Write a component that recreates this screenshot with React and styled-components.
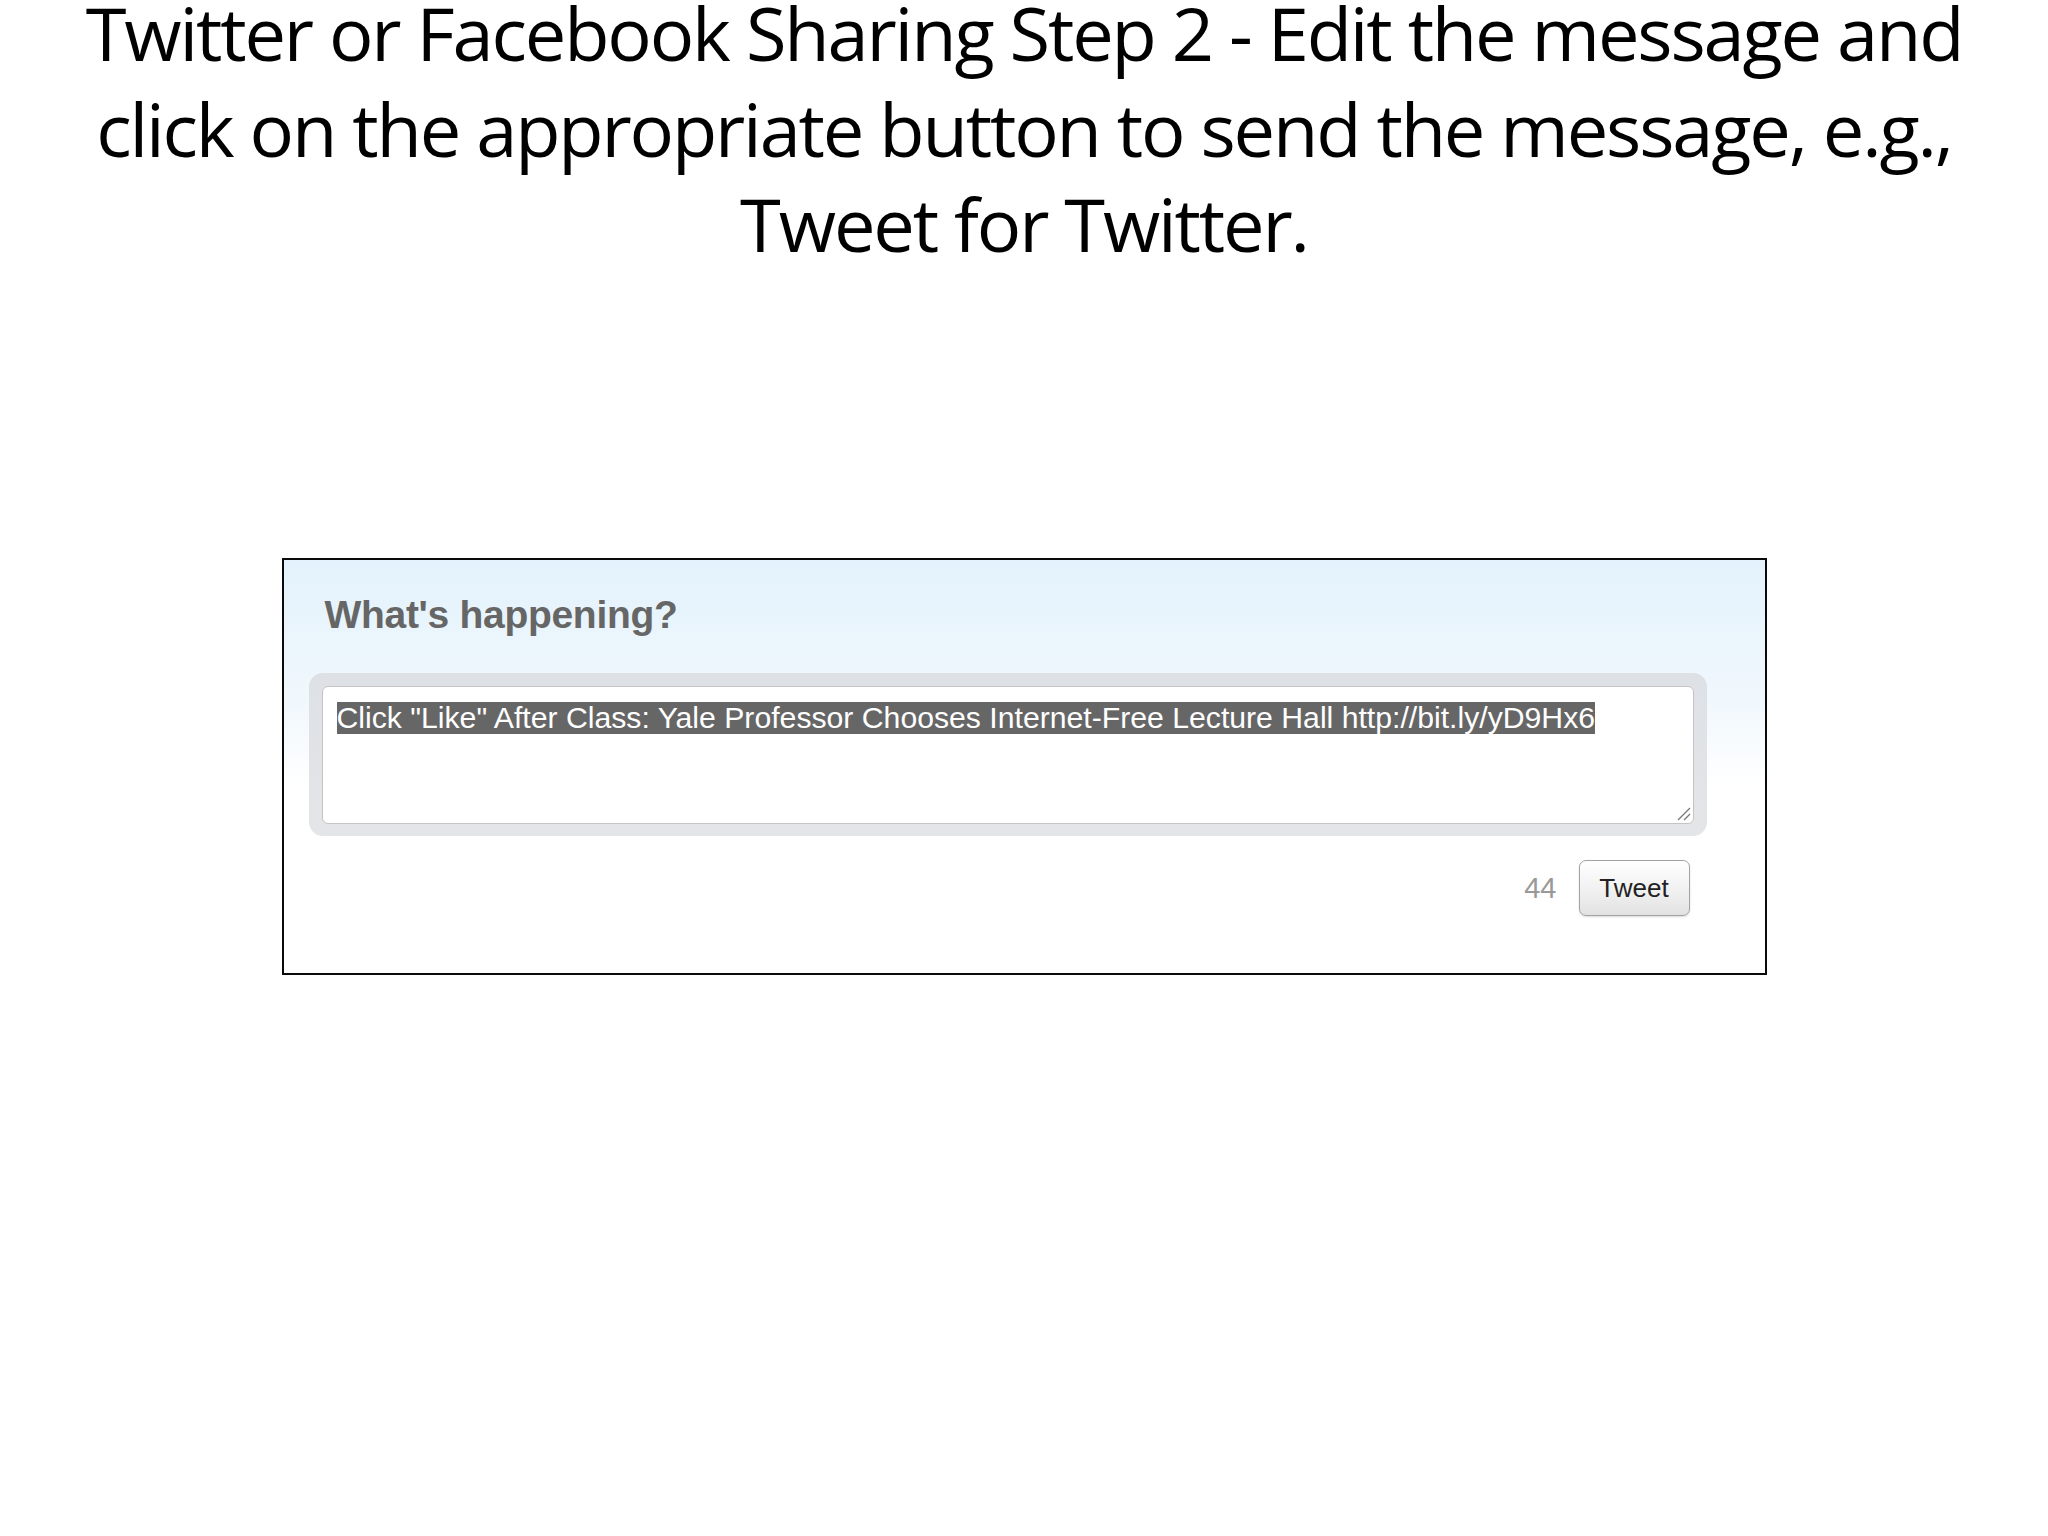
import React from "react";
import styled, { createGlobalStyle } from "styled-components";

const Global = createGlobalStyle`
  html, body { margin: 0; padding: 0; background: #ffffff; }
  body { width: 2048px; height: 1536px; overflow: hidden; }
`;

const Slide = styled.div`
  width: 2048px;
  height: 1536px;
  display: flex;
  flex-direction: column;
  align-items: center;
  background: #ffffff;
`;

const Title = styled.h1`
  margin: 0;
  width: 2000px;
  display: flex;
  flex-direction: column;
  align-items: center;
  font-family: "Open Sans", "Noto Sans", sans-serif;
  font-weight: 400;
  font-size: 74px;
  line-height: 95px;
  letter-spacing: -2.15px;
  color: #000000;
`;

const TitleLine = styled.span`
  white-space: nowrap;
  line-height: ${(p) => (p.$first ? "65px" : "95px")};
  margin-bottom: ${(p) => (p.$first ? "16px" : "0")};
`;

const Card = styled.section`
  box-sizing: border-box;
  margin-top: 287px;
  width: 1485px;
  height: 417px;
  border: 2px solid #0a0a0a;
  padding: 32px 58px 0 25px;
  display: flex;
  flex-direction: column;
  background: linear-gradient(to bottom, #e3f2fc 0%, #f1f8fd 35%, #ffffff 55%);
`;

const Heading = styled.h2`
  margin: 0 0 35px;
  padding-left: 16px;
  font-family: "Liberation Sans", Arial, sans-serif;
  font-weight: 700;
  font-size: 39px;
  line-height: 46px;
  letter-spacing: -0.3px;
  color: #666666;
`;

const Well = styled.div`
  box-sizing: border-box;
  height: 163px;
  padding: 13px 13px 12px;
  border-radius: 14px;
  background: linear-gradient(to bottom, #dde1e6 0%, #e4e5e7 100%);
`;

const Editor = styled.div`
  position: relative;
  box-sizing: border-box;
  height: 138px;
  padding: 15px 14px;
  border: 1px solid #c4c4c4;
  border-radius: 6px;
  background: #ffffff;
`;

const Selected = styled.span`
  display: inline-block;
  background: #666666;
  color: #ffffff;
  font-family: "Liberation Sans", Arial, sans-serif;
  font-size: 30.2px;
  line-height: 32px;
  white-space: nowrap;
`;

const Grip = styled.svg`
  position: absolute;
  right: 2px;
  bottom: 2px;
`;

const Footer = styled.div`
  display: flex;
  justify-content: flex-end;
  align-items: center;
  gap: 22px;
  margin-top: 24px;
  padding-right: 17px;
`;

const Counter = styled.span`
  font-family: "Liberation Sans", Arial, sans-serif;
  font-size: 29px;
  color: #999999;
`;

const TweetButton = styled.button`
  box-sizing: border-box;
  width: 111px;
  height: 56px;
  padding: 0;
  border: 1px solid #a3a3a3;
  border-radius: 7px;
  background: linear-gradient(to bottom, #ffffff 0%, #f2f2f2 50%, #e2e2e2 100%);
  box-shadow: 0 1px 2px rgba(0, 0, 0, 0.15);
  font-family: "Liberation Sans", Arial, sans-serif;
  font-size: 26px;
  color: #222222;
  cursor: pointer;
`;

export default function App() {
  return (
    <>
      <Global />
      <Slide>
        <Title>
          <TitleLine $first>Twitter or Facebook Sharing Step 2 - Edit the message and</TitleLine>
          <TitleLine>click on the appropriate button to send the message, e.g.,</TitleLine>
          <TitleLine>Tweet for Twitter.</TitleLine>
        </Title>
        <Card>
          <Heading>What's happening?</Heading>
          <Well>
            <Editor>
              <Selected>
                Click "Like" After Class: Yale Professor Chooses Internet-Free
                Lecture Hall http://bit.ly/yD9Hx6
              </Selected>
              <Grip width="16" height="16" viewBox="0 0 16 16">
                <line x1="15" y1="3" x2="3" y2="15" stroke="#777" strokeWidth="1.2" />
                <line x1="15" y1="9" x2="9" y2="15" stroke="#777" strokeWidth="1.2" />
              </Grip>
            </Editor>
          </Well>
          <Footer>
            <Counter>44</Counter>
            <TweetButton>Tweet</TweetButton>
          </Footer>
        </Card>
      </Slide>
    </>
  );
}
